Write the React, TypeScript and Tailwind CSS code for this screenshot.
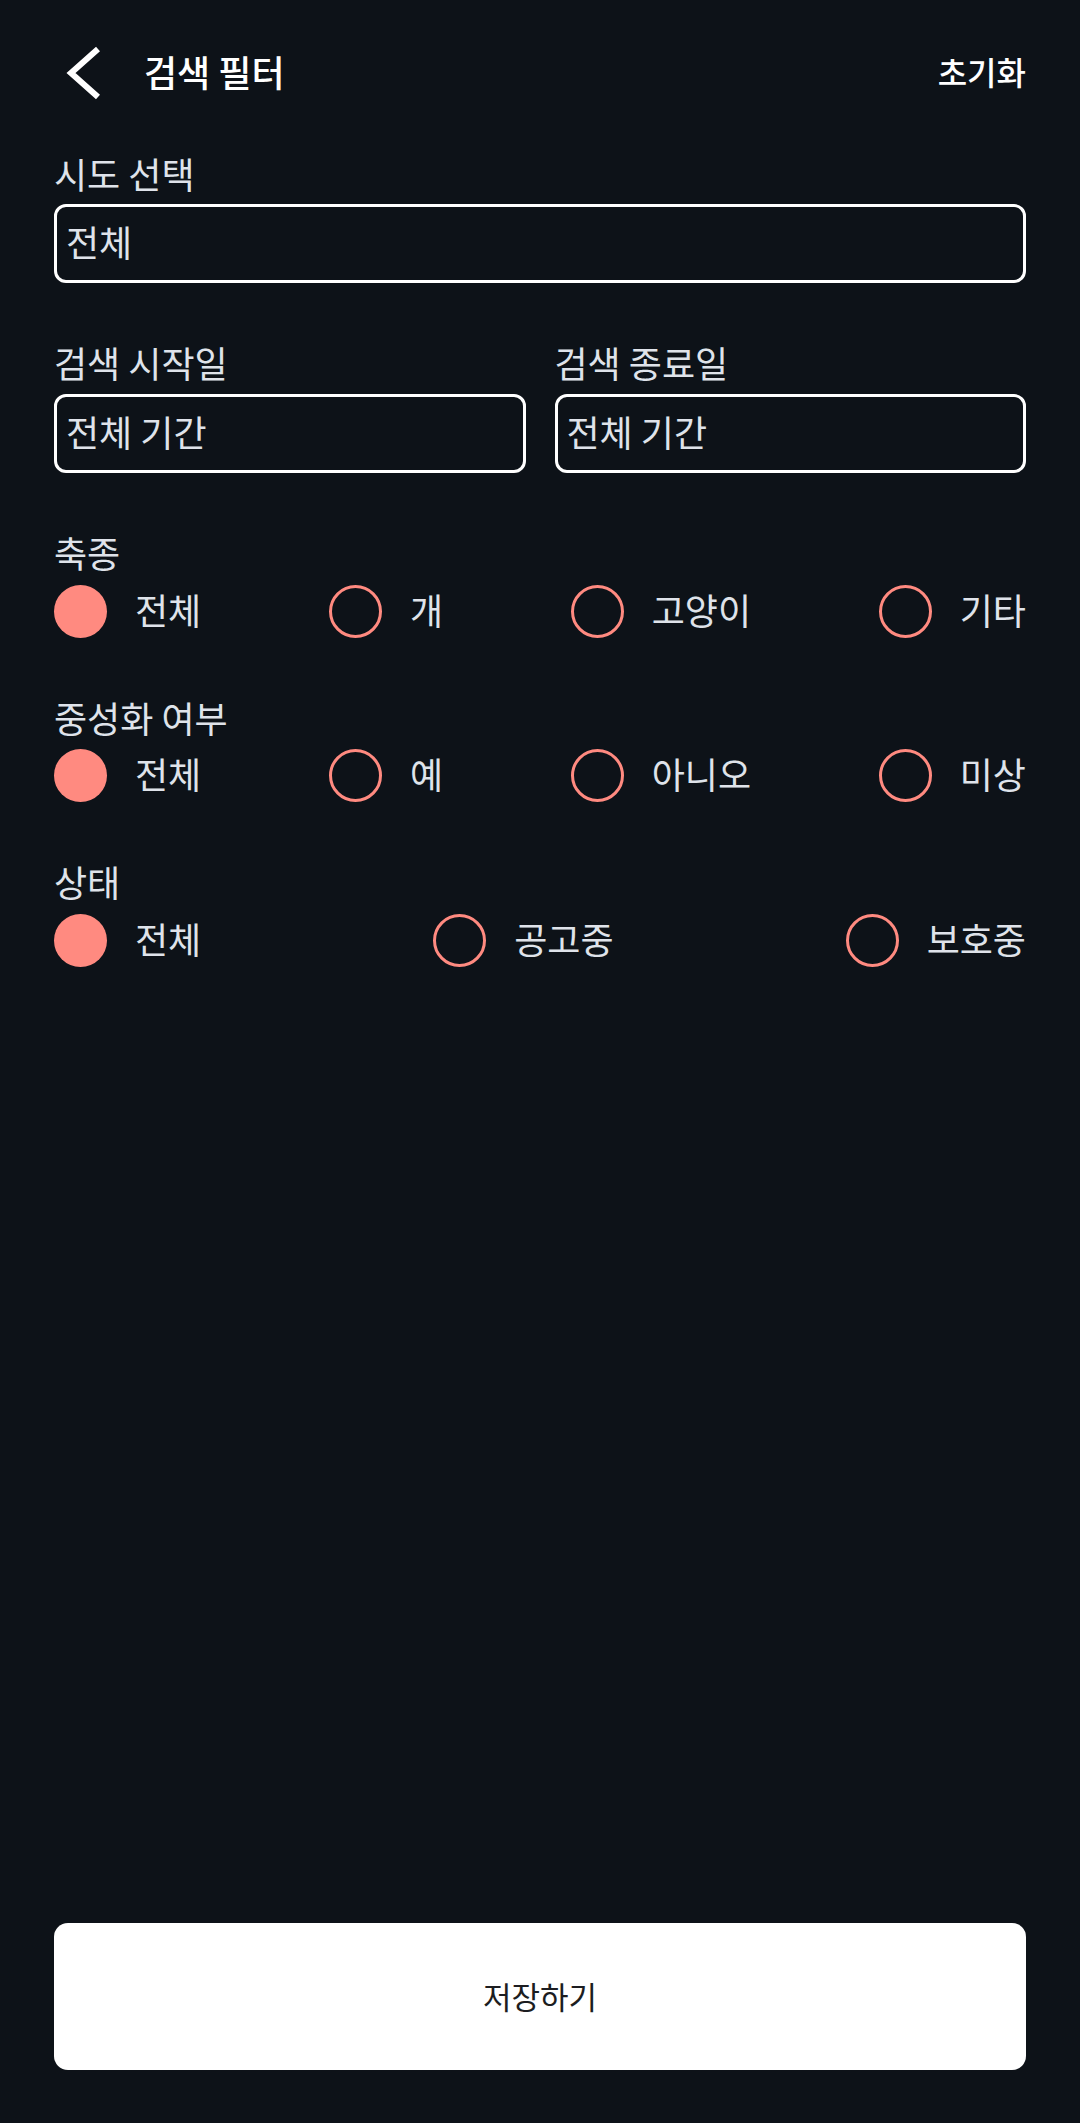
import { useState } from "react";

const FONT = "font-['Noto_Sans_CJK_KR','Noto_Sans',sans-serif]";

type RadioRowProps = {
  options: string[];
  value: string;
  onChange: (v: string) => void;
};

function RadioRow({ options, value, onChange }: RadioRowProps) {
  return (
    <div className="flex items-center justify-between">
      {options.map((opt) => {
        const selected = opt === value;
        return (
          <button
            key={opt}
            onClick={() => onChange(opt)}
            className="flex items-center gap-[28px]"
          >
            <span
              className={
                selected
                  ? "block w-[53px] h-[53px] rounded-full bg-[#ff8a80]"
                  : "block w-[53px] h-[53px] rounded-full border-[3px] border-[#ff8a80]"
              }
            />
            <span className="pb-[6px] text-[36px] leading-[40px] text-[#dfe3ea]">
              {opt}
            </span>
          </button>
        );
      })}
    </div>
  );
}

function Field({ text }: { text: string }) {
  return (
    <div className="flex items-center h-[79px] rounded-[12px] border-[3px] border-white pl-[9px]">
      <span className="pb-[5px] text-[36px] leading-[40px] text-[#dfe3ea]">
        {text}
      </span>
    </div>
  );
}

function Label({ children }: { children: string }) {
  return (
    <div className="text-[36px] leading-[40px] text-[#dfe3ea]">{children}</div>
  );
}

export default function App() {
  const [kind, setKind] = useState("전체");
  const [neuter, setNeuter] = useState("전체");
  const [status, setStatus] = useState("전체");

  return (
    <div
      className={`${FONT} flex flex-col min-h-[2123px] w-full bg-[#0d1218] px-[54px]`}
    >
      {/* header */}
      <div className="flex items-center h-[146px]">
        <svg width="48" height="60" viewBox="0 0 48 60" fill="none">
          <polyline
            points="44,6 17,30 44,54"
            stroke="white"
            strokeWidth="6"
            strokeLinejoin="miter"
          />
        </svg>
        <h1 className="ml-[42px] pb-[5px] text-[36px] leading-[40px] font-medium text-white">
          검색 필터
        </h1>
        <button className="ml-auto pb-[5px] text-[32px] leading-[40px] font-medium text-white">
          초기화
        </button>
      </div>

      <div className="mt-[7px] flex flex-col gap-[59px]">
        <div className="flex flex-col gap-[11px]">
          <Label>시도 선택</Label>
          <Field text="전체" />
        </div>

        <div className="grid grid-cols-2 gap-[29px]">
          <div className="flex flex-col gap-[12px]">
            <Label>검색 시작일</Label>
            <Field text="전체 기간" />
          </div>
          <div className="flex flex-col gap-[12px]">
            <Label>검색 종료일</Label>
            <Field text="전체 기간" />
          </div>
        </div>

        <div className="flex flex-col gap-[13px]">
          <Label>축종</Label>
          <RadioRow
            options={["전체", "개", "고양이", "기타"]}
            value={kind}
            onChange={setKind}
          />
        </div>

        <div className="flex flex-col gap-[12px]">
          <Label>중성화 여부</Label>
          <RadioRow
            options={["전체", "예", "아니오", "미상"]}
            value={neuter}
            onChange={setNeuter}
          />
        </div>

        <div className="flex flex-col gap-[13px]">
          <Label>상태</Label>
          <RadioRow
            options={["전체", "공고중", "보호중"]}
            value={status}
            onChange={setStatus}
          />
        </div>
      </div>

      <div className="flex-1" />

      <button className="mb-[53px] h-[147px] w-full rounded-[14px] bg-white text-[31px] text-[#1c1d21]">
        저장하기
      </button>
    </div>
  );
}
